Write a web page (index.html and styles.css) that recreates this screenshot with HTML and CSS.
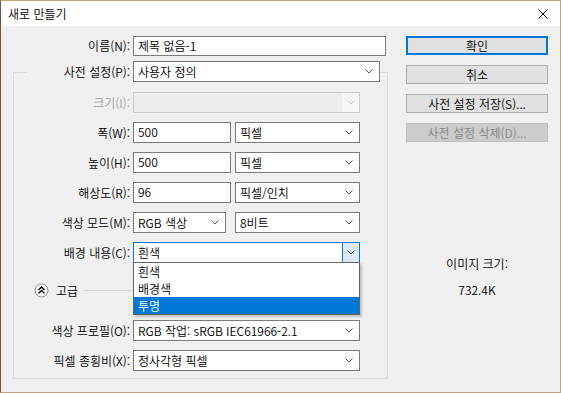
FILE: index.html
```html
<!DOCTYPE html>
<html lang="ko">
<head>
  <meta charset="UTF-8">
  <title>새로 만들기</title>
  <link rel="stylesheet" href="styles.css">
</head>
<body>
  <div class="dialog">
    <!-- Title bar -->
    <div class="titlebar">
      <span class="title">새로 만들기</span>
      <svg class="close" viewBox="0 0 10 10"><path d="M0.5 0.5 L9.5 9.5 M9.5 0.5 L0.5 9.5" stroke="#000" stroke-width="1" fill="none"/></svg>
    </div>

    <div class="content">
      <!-- Left: form -->
      <div class="form">
        <div class="row name-row">
          <span class="lbl">이름(N):</span>
          <div class="field text w-name">제목 없음-1</div>
        </div>

        <div class="group">
          <div class="row group-head">
            <span class="lbl">사전 설정(P):</span>
            <div class="field select w-preset">
              <span>사용자 정의</span>
              <svg class="chev" viewBox="0 0 8 5"><polyline points="0.5,0.5 4,4 7.5,0.5"/></svg>
            </div>
          </div>

          <div class="row">
            <span class="lbl disabled">크기(I):</span>
            <div class="field select w-full off">
              <span></span>
              <span class="drop-btn"><svg class="chev" viewBox="0 0 8 5"><polyline points="0.5,0.5 4,4 7.5,0.5"/></svg></span>
            </div>
          </div>

          <div class="row">
            <span class="lbl">폭(W):</span>
            <div class="field text w-num">500</div>
            <div class="field select w-unit gap-s">
              <span>픽셀</span>
              <svg class="chev" viewBox="0 0 8 5"><polyline points="0.5,0.5 4,4 7.5,0.5"/></svg>
            </div>
          </div>

          <div class="row">
            <span class="lbl">높이(H):</span>
            <div class="field text w-num">500</div>
            <div class="field select w-unit gap-s">
              <span>픽셀</span>
              <svg class="chev" viewBox="0 0 8 5"><polyline points="0.5,0.5 4,4 7.5,0.5"/></svg>
            </div>
          </div>

          <div class="row">
            <span class="lbl">해상도(R):</span>
            <div class="field text w-num">96</div>
            <div class="field select w-unit gap-s">
              <span>픽셀/인치</span>
              <svg class="chev" viewBox="0 0 8 5"><polyline points="0.5,0.5 4,4 7.5,0.5"/></svg>
            </div>
          </div>

          <div class="row">
            <span class="lbl">색상 모드(M):</span>
            <div class="field select w-mode">
              <span>RGB 색상</span>
              <svg class="chev" viewBox="0 0 8 5"><polyline points="0.5,0.5 4,4 7.5,0.5"/></svg>
            </div>
            <div class="field select w-unit gap-l">
              <span>8비트</span>
              <svg class="chev" viewBox="0 0 8 5"><polyline points="0.5,0.5 4,4 7.5,0.5"/></svg>
            </div>
          </div>

          <div class="row">
            <span class="lbl">배경 내용(C):</span>
            <div class="field select w-full focus">
              <span>흰색</span>
              <span class="drop-btn"><svg class="chev" viewBox="0 0 8 5"><polyline points="0.5,0.5 4,4 7.5,0.5"/></svg></span>
              <!-- open dropdown list -->
              <ul class="menu">
                <li>흰색</li>
                <li>배경색</li>
                <li class="picked">투명</li>
              </ul>
            </div>
          </div>

          <div class="adv-row">
            <svg class="adv-btn" viewBox="0 0 15 15">
              <circle cx="7.5" cy="7.5" r="6.5" fill="#fff" stroke="#8f8f8f"/>
              <polyline points="4.5,7 7.5,4 10.5,7" fill="none" stroke="#000" stroke-width="1.4"/>
              <polyline points="4.5,10.5 7.5,7.5 10.5,10.5" fill="none" stroke="#000" stroke-width="1.4"/>
            </svg>
            <span class="adv-text">고급</span>
            <span class="adv-line"></span>
          </div>

          <div class="row">
            <span class="lbl">색상 프로필(O):</span>
            <div class="field select w-full">
              <span>RGB 작업: sRGB IEC61966-2.1</span>
              <svg class="chev" viewBox="0 0 8 5"><polyline points="0.5,0.5 4,4 7.5,0.5"/></svg>
            </div>
          </div>

          <div class="row">
            <span class="lbl">픽셀 종횡비(X):</span>
            <div class="field select w-full">
              <span>정사각형 픽셀</span>
              <svg class="chev" viewBox="0 0 8 5"><polyline points="0.5,0.5 4,4 7.5,0.5"/></svg>
            </div>
          </div>
        </div>
      </div>

      <!-- Right: buttons -->
      <div class="side">
        <div class="btn default">확인</div>
        <div class="btn">취소</div>
        <div class="btn">사전 설정 저장(S)...</div>
        <div class="btn off">사전 설정 삭제(D)...</div>
        <div class="size-label">이미지 크기:</div>
        <div class="size-value">732.4K</div>
      </div>
    </div>
  </div>
</body>
</html>
```

FILE: styles.css
```css
/* General */
* {
  box-sizing: border-box;
}

body {
  margin: 0;
  background-color: #f0f0f0;
  font-family: "Noto Sans CJK KR", "Liberation Sans", sans-serif;
  font-size: 12px;
  font-weight: 350;
  color: #000;
}

/* Window frame */
.dialog {
  width: 561px;
  height: 393px;
  border: 1px solid #c2a47a;
  border-left-color: #6f5642;
  background-color: #f0f0f0;
  display: flex;
  flex-direction: column;
}

.titlebar {
  height: 25px;
  background-color: #fff;
  display: flex;
  align-items: center;
  justify-content: space-between;
  padding: 0 12px 0 7px;
}

.title {
  line-height: 16px;
}

.close {
  width: 10px;
  height: 10px;
}

.content {
  display: flex;
  padding-top: 10px;
}

/* Left column */
.form {
  width: 387px;
  flex: none;
}

.row {
  display: flex;
  align-items: center;
  height: 21px;
}

.lbl {
  flex: none;
  width: 119px;
  padding-right: 3px;
  text-align: right;
  line-height: 16px;
  white-space: nowrap;
}

.lbl.disabled {
  color: #a0a0a0;
}

.name-row {
  height: 20px;
}

.name-row .lbl {
  width: 132px;
}

/* Group box */
.group {
  margin: 16px 0 0 12px;
  width: 375px;
  border: 1px solid #dcdcdc;
  padding-bottom: 7px;
  display: flex;
  flex-direction: column;
  gap: 9px;
}

.group-head {
  margin: -12px 6px 1px 13px;
  background-color: #f0f0f0;
}

.group-head .lbl {
  width: 106px;
}

/* Fields */
.field {
  height: 100%;
  border: 1px solid #7a7a7a;
  background-color: #fff;
  padding-left: 4px;
  line-height: 18px;
  white-space: nowrap;
  flex: none;
}

.select {
  display: flex;
  align-items: center;
  justify-content: space-between;
  position: relative;
}

.chev {
  width: 8px;
  height: 5px;
  margin-right: 6px;
  fill: none;
  stroke: #555;
  stroke-width: 1;
}

.w-name { width: 253px; }
.w-preset { width: 247px; }
.w-full { width: 227px; }
.w-num { width: 98px; }
.w-unit { width: 125px; }
.w-mode { width: 93px; }
.gap-s { margin-left: 4px; }
.gap-l { margin-left: 9px; }

.drop-btn {
  width: 17px;
  height: 100%;
  display: flex;
  align-items: center;
  justify-content: center;
}

.drop-btn .chev {
  margin: 0;
}

.select.off {
  border-color: #cccccc;
  background-color: #eeeeee;
}

.select.off .drop-btn {
  background-color: #f6f6f6;
}

.select.off .chev {
  stroke: #c4c4c4;
}

.select.focus {
  border-color: #0078d7;
}

.select.focus .drop-btn {
  border-left: 1px solid #0078d7;
  background-color: #dde9f4;
}

.select.focus .chev {
  stroke: #333;
}

/* Open dropdown list */
.menu {
  position: absolute;
  top: 100%;
  left: -1px;
  width: 227px;
  margin: 0;
  padding: 0;
  list-style: none;
  background-color: #fff;
  border: 1px solid #646464;
  box-shadow: 2px 2px 2px rgba(0, 0, 0, 0.2);
  z-index: 2;
}

.menu li {
  height: 17px;
  line-height: 17px;
  padding-left: 4px;
}

.menu li.picked {
  background-color: #0078d7;
  color: #fff;
}

/* Advanced toggle */
.adv-row {
  display: flex;
  align-items: center;
  height: 15px;
  margin: 11px 0 13px 20px;
}

.adv-btn {
  width: 15px;
  height: 15px;
  flex: none;
}

.adv-text {
  margin-left: 7px;
  line-height: 16px;
}

.adv-line {
  flex: 1;
  height: 1px;
  margin: 0 27px 0 6px;
  background-color: #d5d5d5;
}

/* Right column */
.side {
  width: 142px;
  margin-left: 18px;
  display: flex;
  flex-direction: column;
  gap: 10px;
}

.btn {
  height: 19px;
  border: 1px solid #adadad;
  background-color: #e1e1e1;
  text-align: center;
  line-height: 17px;
  white-space: nowrap;
}

.btn.default {
  border: 2px solid #0078d7;
  line-height: 15px;
}

.btn.off {
  border-color: #bfbfbf;
  background-color: #cccccc;
  color: #838383;
}

.size-label {
  margin-top: 104px;
  text-align: center;
  line-height: 16px;
}

.size-value {
  text-align: center;
  line-height: 16px;
}
```
